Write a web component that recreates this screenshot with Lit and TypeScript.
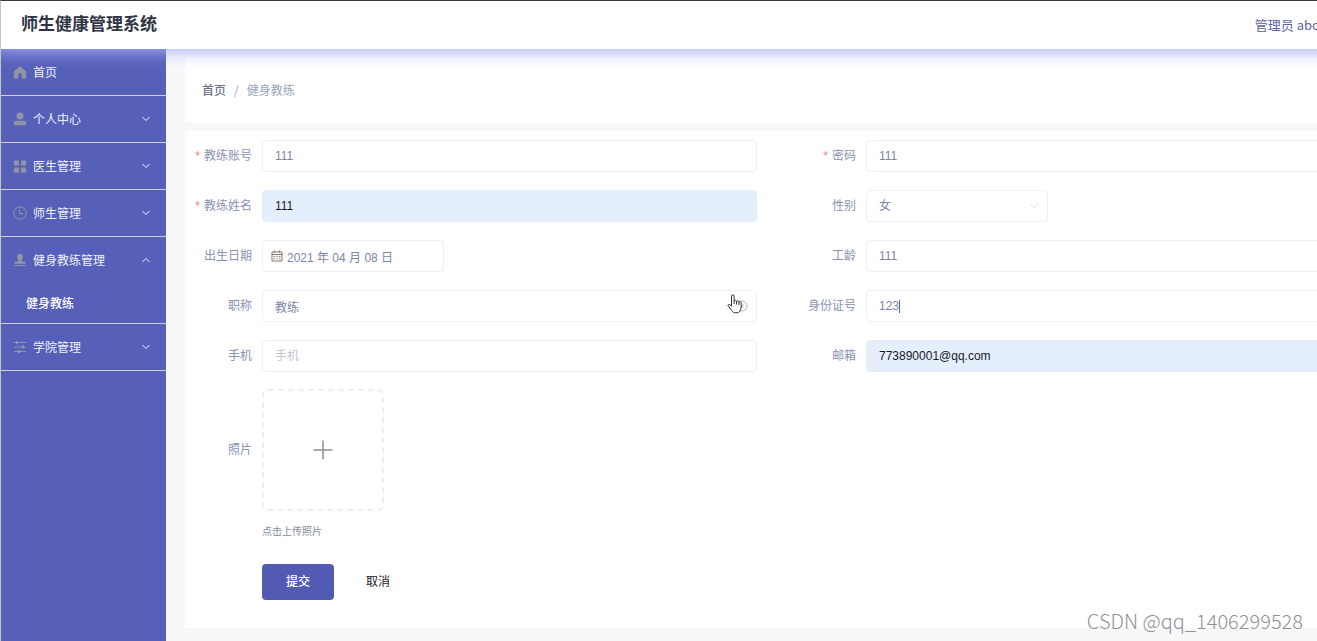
import { LitElement, html, css, svg, nothing } from "lit";
import { customElement, state } from "lit/decorators.js";
import { classMap } from "lit/directives/class-map.js";

interface MenuEntry {
  label: string;
  icon: keyof typeof icons;
  children?: string[];
  expandable: boolean;
}

const icons = {
  home: svg`<path fill="currentColor" d="M7 1 0.8 6.6v6.9h4.4V9.8a1.8 1.8 0 0 1 3.6 0v3.7h4.4V6.6z"/>`,
  user: svg`<circle cx="7" cy="4" r="3.5" fill="currentColor"/><path fill="currentColor" d="M.8 13.2v-2Q.8 8.800 3.400 8.800h7.200q2.600 0 2.600 2.400v2z"/>`,
  grid: svg`<path fill="currentColor" d="M1 1.5h5v5H1zM8 1.5h5v5H8zM1 8.500h5v5H1zM8 8.500h5v5H8z"/>`,
  clock: svg`<circle cx="7" cy="7" r="6.200" fill="none" stroke="currentColor"/><path fill="none" stroke="currentColor" d="M6.500 3.500v4h4"/>`,
  stamp: svg`<path fill="currentColor" d="M7 .8a2.900 2.900 0 0 1 2.900 2.900c0 1.500-1.100 2.200-1.100 3.600 0 1 .5 1.400 1.400 1.400h2.600v2H1.200v-2h2.600c.9 0 1.400-.4 1.400-1.400 0-1.400-1.100-2.100-1.100-3.600A2.900 2.900 0 0 1 7 .8zM1.200 12h11.600v1H1.200z"/>`,
  sliders: svg`<path fill="none" stroke="currentColor" d="M1 2.500h12M1 7h12M1 11.500h12"/><path fill="currentColor" d="M3 1h2v3H3zM9 5.500h2v3H9zM5 10h2v3H5z"/>`,
};

const MENU: MenuEntry[] = [
  { label: "首页", icon: "home", expandable: false },
  { label: "个人中心", icon: "user", expandable: true },
  { label: "医生管理", icon: "grid", expandable: true },
  { label: "师生管理", icon: "clock", expandable: true },
  { label: "健身教练管理", icon: "stamp", expandable: true, children: ["健身教练"] },
  { label: "学院管理", icon: "sliders", expandable: true },
];

@customElement("side-menu")
export class SideMenu extends LitElement {
  @state() private open = "健身教练管理";

  static styles = css`
    :host {
      display: block;
      background: #5660b9;
      font-family: "Noto Sans CJK SC", sans-serif;
    }
    ul {
      margin: 0;
      padding: 0;
      list-style: none;
    }
    .entry {
      border-bottom: 1px solid #cfd2dc;
    }
    .row,
    .sub {
      display: flex;
      align-items: center;
      width: 100%;
      box-sizing: border-box;
      border: 0;
      background: none;
      color: #f0f1fa;
      font: inherit;
      text-decoration: none;
      cursor: pointer;
    }
    .row {
      height: 46px;
      padding: 0 16px 0 12px;
      gap: 6px;
    }
    .icon {
      width: 14px;
      height: 14px;
      color: #9095a4;
    }
    .text {
      flex: 1;
      text-align: left;
    }
    .chevron {
      width: 8px;
      height: 8px;
    }
    .up {
      transform: rotate(180deg);
    }
    .sub {
      height: 40px;
      padding-left: 25px;
      color: #fff;
      font-weight: 500;
    }
  `;

  private toggle(label: string) {
    this.open = this.open === label ? "" : label;
  }

  render() {
    return html`<nav>
      <ul>
        ${MENU.map((m) => {
          const open = this.open === m.label;
          return html`<li class="entry">
            <button class="row" @click=${() => this.toggle(m.label)}>
              <svg class="icon" viewBox="0 0 14 14">${icons[m.icon]}</svg>
              <span class="text">${m.label}</span>
              ${m.expandable
                ? html`<svg class=${classMap({ chevron: true, up: open })} viewBox="0 0 8 8">
                    <path d="M.5 2 4 5.500 7.500 2" fill="none" stroke="currentColor" />
                  </svg>`
                : nothing}
            </button>
            ${open ? m.children?.map((c) => html`<a class="sub" href="#">${c}</a>`) : nothing}
          </li>`;
        })}
      </ul>
    </nav>`;
  }
}

@customElement("coach-form")
export class CoachForm extends LitElement {
  static styles = css`
    :host {
      display: block;
      background: #fff;
    }
    form {
      padding: 9px 10px 28px;
    }
    .grid {
      display: grid;
      grid-template-columns: 1fr 1fr;
      gap: 18px 42px;
    }
    .item {
      display: grid;
      grid-template-columns: 57px 1fr;
      column-gap: 10px;
      align-items: center;
      min-width: 0;
    }
    .label {
      color: #8a91b3;
      text-align: right;
      white-space: nowrap;
    }
    .required::before {
      content: "*";
      margin-right: 4px;
      color: #f08078;
    }
    .field {
      position: relative;
      display: flex;
      align-items: center;
      height: 32px;
      box-sizing: border-box;
      padding: 0 8px 0 12px;
      border: 1px solid #eeeef8;
      border-radius: 4px;
      color: #7d84a8;
    }
    .short {
      width: 182px;
    }
    .date {
      padding-left: 8px;
      gap: 4px;
    }
    .filled {
      background: #e5effc;
      border-color: #e5effc;
      color: #16182c;
    }
    .input {
      flex: 1;
      min-width: 0;
      height: 30px;
      padding: 0;
      border: 0;
      outline: 0;
      background: none;
      color: inherit;
      font: inherit;
      appearance: none;
    }
    .input::placeholder {
      color: #c3c6d0;
      opacity: 1;
    }
    .fit {
      flex: none;
      field-sizing: content;
    }
    .caret {
      width: 1px;
      height: 13px;
      background: #5d6480;
    }
    .calendar {
      width: 12px;
      height: 12px;
      color: #807868;
    }
    .arrow {
      width: 10px;
      height: 10px;
      color: #e2e3ee;
      pointer-events: none;
    }
    .clear {
      display: flex;
      padding: 0;
      border: 0;
      background: none;
      color: #b4b7c0;
    }
    .clear svg {
      width: 12px;
      height: 12px;
    }
    .pointer {
      position: absolute;
      right: 13px;
      top: 3px;
      width: 16px;
      height: 20px;
      pointer-events: none;
    }
    .photo {
      margin-top: 17px;
    }
    .upload {
      display: flex;
      align-items: center;
      justify-content: center;
      width: 122px;
      height: 122px;
      border: 2px dashed #eeeef8;
      border-radius: 6px;
      background: #fff;
      color: #8b919c;
    }
    .upload svg {
      width: 20px;
      height: 20px;
    }
    .hint {
      margin-left: 67px;
      padding-top: 12px;
      color: #858b98;
      font-size: 10px;
      line-height: 18px;
    }
    .actions {
      display: flex;
      gap: 8px;
      margin: 23px 0 0 67px;
    }
    .btn {
      width: 72px;
      height: 36px;
      padding: 0;
      border: 0;
      border-radius: 4px;
      background: #fff;
      color: #202124;
      font: inherit;
    }
    .primary {
      background: #515bb4;
      color: #fff;
      font-weight: 500;
    }
  `;

  private text(id: string, label: string, value: string, required = false, filled = false) {
    return html`<div class="item">
      <label for=${id} class=${classMap({ label: true, required })}>${label}</label>
      <div class=${classMap({ field: true, filled })}>
        <input id=${id} class="input" .value=${value} placeholder=${label} autocomplete="off" />
      </div>
    </div>`;
  }

  render() {
    return html`<form @submit=${(e: Event) => e.preventDefault()}>
      <div class="grid">
        ${this.text("account", "教练账号", "111", true)}
        ${this.text("password", "密码", "111", true)}
        ${this.text("name", "教练姓名", "111", true, true)}
        <div class="item">
          <label class="label" for="gender">性别</label>
          <div class="field short">
            <select id="gender" class="input">
              <option>女</option>
              <option>男</option>
            </select>
            <svg class="arrow" viewBox="0 0 10 10">
              <path d="M1 3l4 4 4-4" fill="none" stroke="currentColor" />
            </svg>
          </div>
        </div>
        <div class="item">
          <label class="label" for="birth">出生日期</label>
          <div class="field short date">
            <svg class="calendar" viewBox="0 0 12 12">
              <path
                d="M1 2h10v9H1zM1 4.500h10M3.500 .5v2M8.500 .5v2"
                fill="none"
                stroke="currentColor"
              />
              <path d="M2.500 6.500h7M2.500 8.800h7" fill="none" stroke="currentColor" stroke-dasharray="1.400 1.400" />
            </svg>
            <input id="birth" class="input" .value=${"2021 年 04 月 08 日"} />
          </div>
        </div>
        ${this.text("years", "工龄", "111")}
        <div class="item">
          <label class="label" for="title">职称</label>
          <div class="field">
            <input id="title" class="input" .value=${"教练"} />
            <button class="clear" type="button" aria-label="清空">
              <svg viewBox="0 0 12 12">
                <circle cx="6" cy="6" r="5" fill="none" stroke="currentColor" />
                <path d="M4.300 4.300l3.400 3.400M7.700 4.300L4.300 7.700" stroke="currentColor" />
              </svg>
            </button>
            <svg class="pointer" viewBox="0 0 16 20">
              <path
                d="M4.500 12.200V2.200a1.300 1.300 0 0 1 2.600 0V7c.4-.9 2.200-.8 2.400.3.500-.8 2.200-.6 2.400.6.700-.7 2.300-.3 2.300 1V13c0 1.800-.7 2.900-1.400 4.200-.6 1.100-1.400 1.500-2.800 1.500H8.200c-1.600 0-2.400-.6-3.200-1.900L1.200 11.900c-.7-1 .7-2.100 1.700-1.200z"
                fill="#fff"
                stroke="#30323a"
                stroke-linejoin="round"
              />
              <path d="M7.100 7v3M9.500 7.500v3M11.900 8v3" stroke="#30323a" />
            </svg>
          </div>
        </div>
        <div class="item">
          <label class="label" for="idcard">身份证号</label>
          <div class="field">
            <input id="idcard" class="input fit" .value=${"123"} />
            <span class="caret"></span>
          </div>
        </div>
        ${this.text("mobile", "手机", "")}
        ${this.text("email", "邮箱", "773890001@qq.com", false, true)}
      </div>
      <div class="item photo">
        <label class="label" for="photo">照片</label>
        <button id="photo" class="upload" type="button" aria-label="点击上传照片">
          <svg viewBox="0 0 20 20">
            <path d="M10 .5v19M.5 10h19" stroke="currentColor" stroke-width="1.500" />
          </svg>
        </button>
      </div>
      <div class="hint">点击上传照片</div>
      <div class="actions">
        <button class="btn primary" type="submit">提交</button>
        <button class="btn" type="button">取消</button>
      </div>
    </form>`;
  }
}

@customElement("app-root")
export class AppRoot extends LitElement {
  static styles = css`
    :host {
      display: block;
      position: relative;
      overflow: hidden;
      font: 12px/16px "Liberation Sans", "Noto Sans CJK SC", sans-serif;
    }
    .canvas {
      display: flex;
      flex-direction: column;
      width: calc(100% + 73px);
      min-height: 100vh;
      box-sizing: border-box;
      border-top: 1px solid #3a3739;
      border-left: 1px solid #c4c4c4;
      background: #f6f8fa;
    }
    .header {
      position: relative;
      z-index: 1;
      display: flex;
      align-items: center;
      justify-content: space-between;
      height: 48px;
      padding: 0 70px 0 20px;
      background: #fff;
      box-shadow: 0 -6px 16px 8px #a9b2fc;
      clip-path: inset(0 0 -24px 0);
    }
    .title {
      margin: 0;
      color: #303545;
      font-size: 17px;
      font-weight: 700;
    }
    .user {
      color: #5c64a0;
      font-family: "Noto Sans CJK SC", sans-serif;
      font-size: 13px;
    }
    .body {
      display: flex;
      flex: 1;
    }
    .side {
      width: 165px;
      flex: none;
    }
    .main {
      flex: 1;
      min-width: 0;
      padding: 8px 19px 13px;
    }
    .crumbs {
      display: flex;
      align-items: center;
      gap: 8px;
      height: 66px;
      margin-bottom: 8px;
      padding-left: 17px;
      background: #fff;
      color: #98a5bd;
      font-family: "Noto Sans CJK SC", sans-serif;
    }
    .crumbs a {
      color: #6c728c;
      font-weight: 500;
      text-decoration: none;
    }
    .mark {
      position: absolute;
      right: 14px;
      bottom: 6px;
      color: #8f9194;
      font: 300 20px/28px "Noto Sans CJK SC", sans-serif;
    }
  `;

  render() {
    return html`<div class="canvas">
        <header class="header">
          <h1 class="title">师生健康管理系统</h1>
          <span class="user">管理员 abo</span>
        </header>
        <div class="body">
          <side-menu class="side"></side-menu>
          <main class="main">
            <nav class="crumbs">
              <a href="#">首页</a><span>/</span><span>健身教练</span>
            </nav>
            <coach-form></coach-form>
          </main>
        </div>
      </div>
      <div class="mark">CSDN @qq_1406299528</div>`;
  }
}
